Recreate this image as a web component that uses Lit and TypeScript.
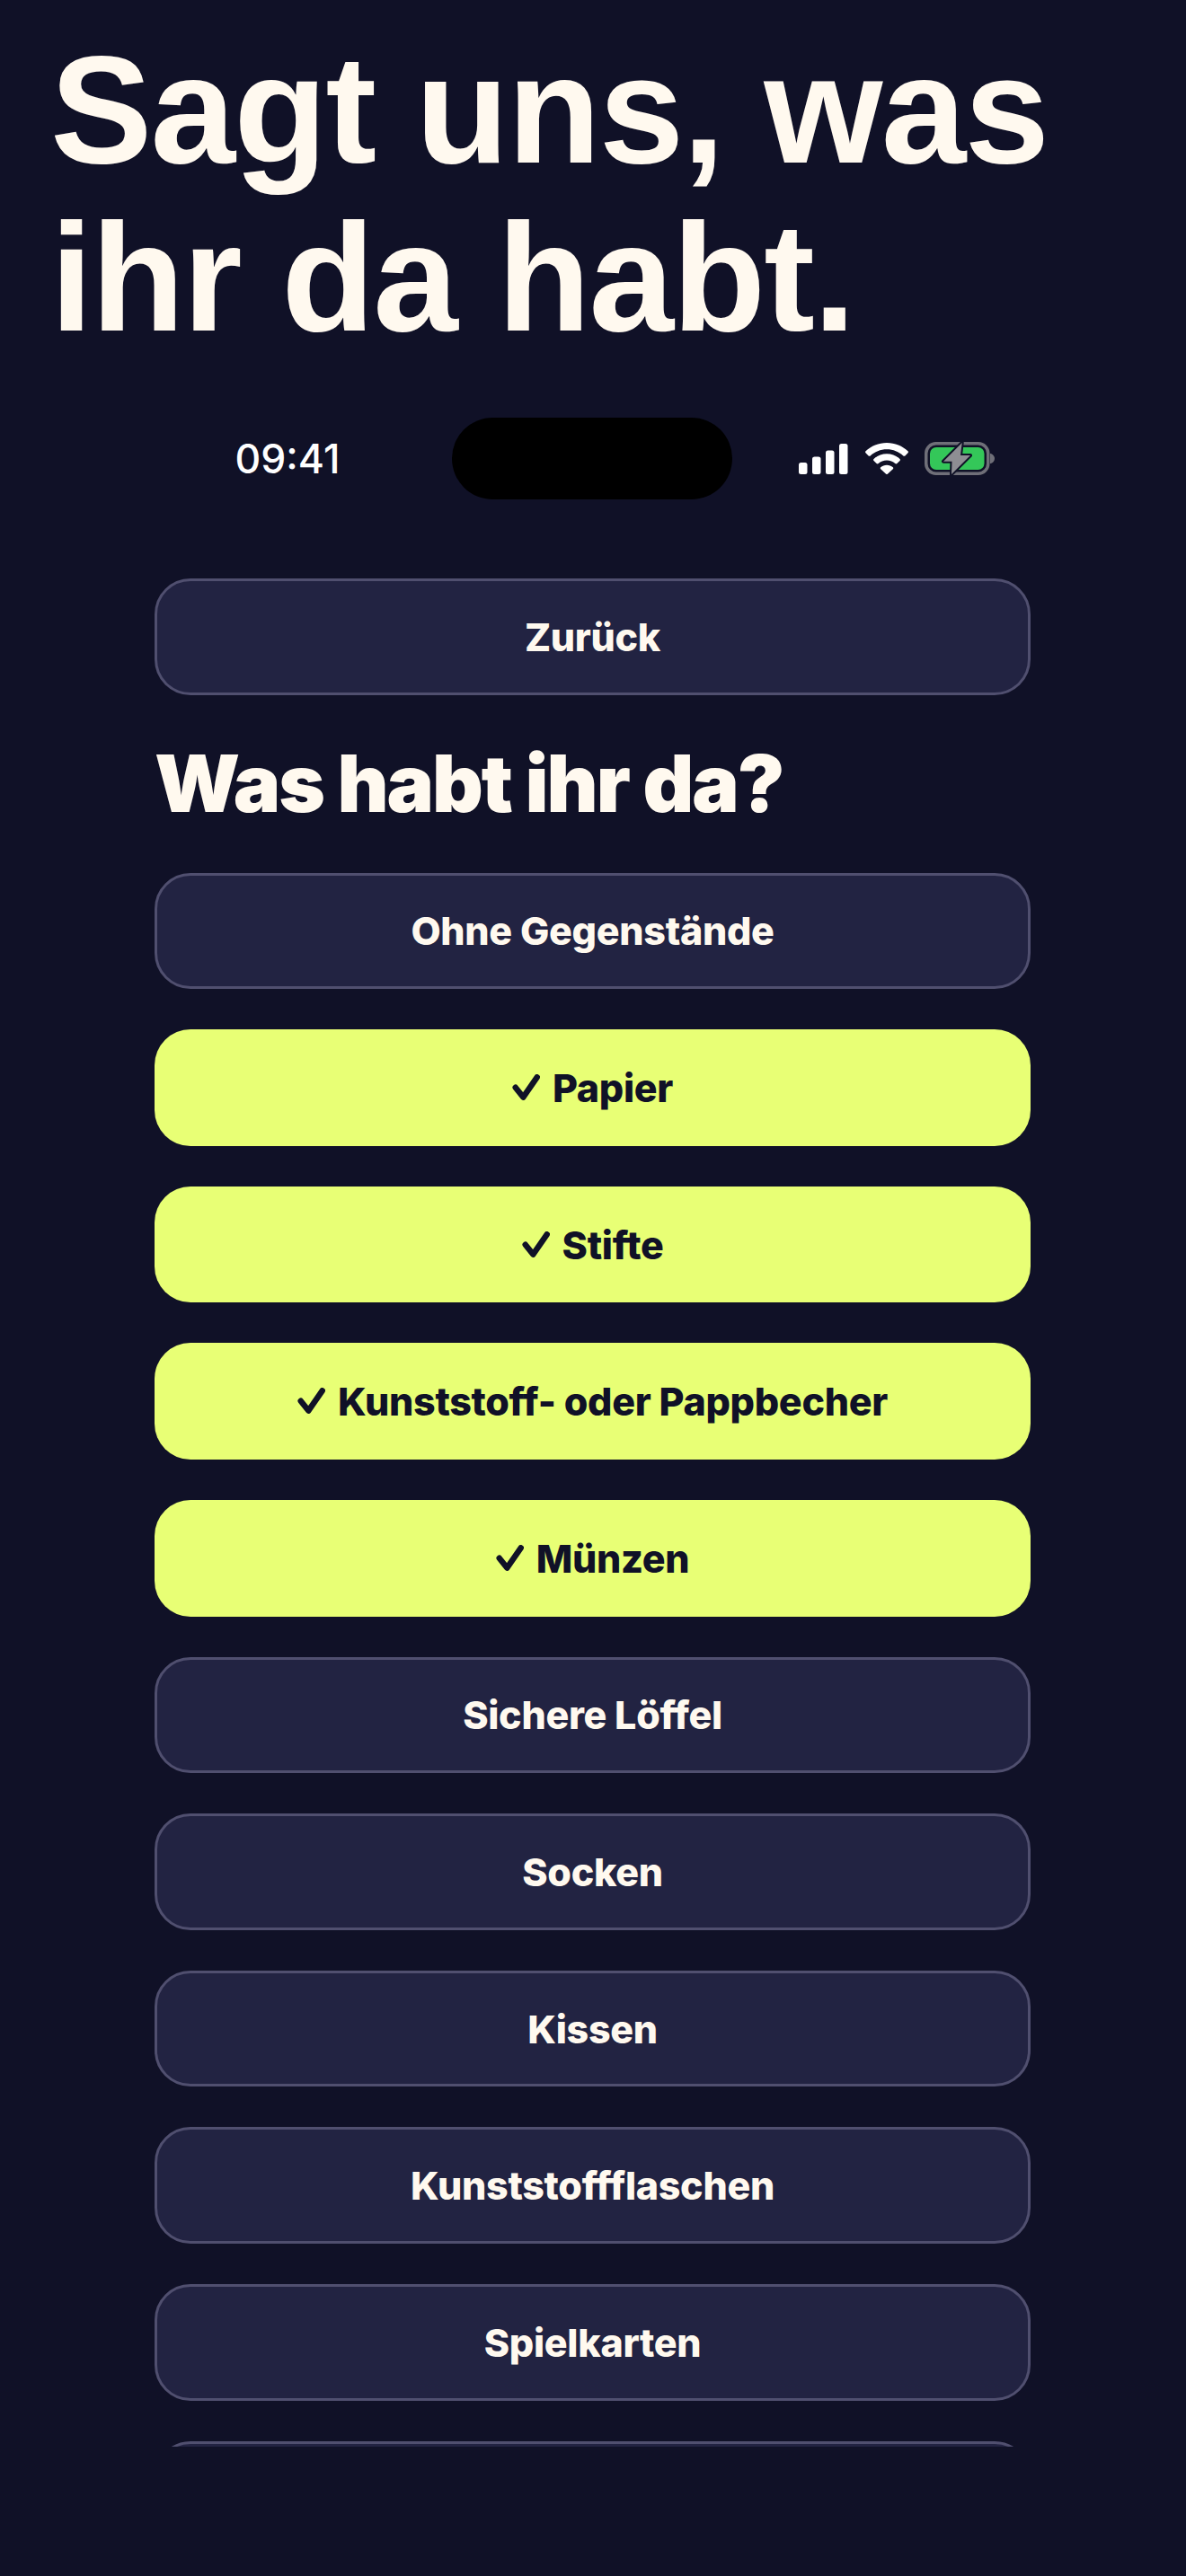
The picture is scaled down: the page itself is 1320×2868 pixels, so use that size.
import { LitElement, html, css, svg } from "lit";
import { customElement } from "lit/decorators.js";
import { classMap } from "lit/directives/class-map.js";

// the last button is cut off by the scroll area, its label is not visible
const OPTIONS = [
  { label: "Ohne Gegenstände", on: false },
  { label: "Papier", on: true },
  { label: "Stifte", on: true },
  { label: "Kunststoff- oder Pappbecher", on: true },
  { label: "Münzen", on: true },
  { label: "Sichere Löffel", on: false },
  { label: "Socken", on: false },
  { label: "Kissen", on: false },
  { label: "Kunststoffflaschen", on: false },
  { label: "Spielkarten", on: false },
  { label: "", on: false },
];

const signal = svg`<rect x="0" y="21" width="9.500" height="13" rx="2.500"/><rect x="15" y="14.500" width="9.500" height="19.500" rx="2.500"/><rect x="30" y="7.500" width="9.500" height="26.500" rx="2.500"/><rect x="45" y="0" width="9.500" height="34" rx="2.500"/>`;

const wifi = svg`<path d="M24 0C14.800 0 6.600 3.500.5 9.300c-.6.6-.6 1.400 0 2L3.600 14.400c.6.6 1.500.6 2.100 0C10.500 9.900 17 7.200 24 7.200s13.500 2.700 18.300 7.200c.6.6 1.500.6 2.100 0l3.100-3.100c.6-.6.6-1.400 0-2C41.400 3.500 33.200 0 24 0Z"/><path d="M24 12.300c-5.600 0-10.700 2.100-14.500 5.700-.6.6-.6 1.400 0 2l3.100 3.100c.6.6 1.500.6 2.100 0 2.400-2.200 5.700-3.600 9.300-3.600s6.900 1.400 9.300 3.600c.6.6 1.500.6 2.100 0l3.100-3.100c.6-.6.6-1.400 0-2-3.800-3.600-8.900-5.700-14.500-5.700Z"/><path d="M24 24.700c-2.600 0-5 1-6.800 2.600-.6.6-.6 1.400 0 2l5.700 5.300c.6.6 1.600.6 2.200 0l5.700-5.300c.6-.6.6-1.400 0-2-1.800-1.600-4.200-2.600-6.800-2.600Z"/>`;

const check = html`<svg class="check" width="31" height="30" viewBox="0 0 31 30"><path d="M3.700 14.700 12.300 25.600 27.700 3.300"/></svg>`;

@customElement("app-root")
export class AppRoot extends LitElement {
  static styles = css`
    :host {
      display: block;
      min-height: 2868px;
      background: #101127;
      color: #fff9ef;
      font-family: Inter, "Liberation Sans", sans-serif;
    }
    h1 {
      margin: 0;
      padding: 29px 56px 0;
      font-family: "Liberation Sans", Arial, sans-serif;
      font-size: 170px;
      line-height: 187px;
      font-weight: 700;
      letter-spacing: -1.800px;
    }
    .status {
      display: grid;
      grid-template-columns: 503px 312px 1fr;
      align-items: center;
      height: 91px;
      margin-top: 62px;
    }
    .time {
      padding-left: 137px;
      text-align: center;
      font-size: 44.500px;
      font-weight: 500;
      color: #fff;
    }
    .island {
      height: 91px;
      border-radius: 46px;
      background: #000;
    }
    .icons {
      display: flex;
      align-items: center;
      gap: 18.500px;
      padding-left: 74px;
    }
    .icons svg {
      display: block;
      fill: #fff;
    }
    .batt-frame {
      fill: none;
      stroke: #6f6f78;
      stroke-width: 3.500;
    }
    .batt-fill {
      fill: #34c759;
    }
    .batt-cap {
      fill: #6f6f78;
    }
    .batt-bolt {
      fill: #8e8e93;
      stroke: #101127;
      stroke-width: 4;
      paint-order: stroke;
      stroke-linejoin: round;
    }
    .screen {
      height: 2080px;
      margin: 88px 173px 0 172px;
      overflow: hidden;
    }
    .opt {
      box-sizing: border-box;
      display: flex;
      align-items: center;
      justify-content: center;
      gap: 14px;
      height: 129.600px;
      border: 3px solid #504f6f;
      border-radius: 40px;
      background: #222342;
      font-size: 43px;
      font-weight: 800;
      letter-spacing: -0.300px;
      color: #fff9ef;
    }
    .opt.on {
      border: 0;
      background: #e8ff75;
      color: #101127;
    }
    .check {
      display: block;
      flex: none;
      fill: none;
      stroke: #101127;
      stroke-width: 6.500;
      stroke-linecap: round;
      stroke-linejoin: round;
    }
    h2 {
      margin: 45px 0 47px;
      font-size: 88px;
      line-height: 106px;
      font-weight: 900;
      letter-spacing: -2px;
    }
    .list {
      display: flex;
      flex-direction: column;
      gap: 45px;
    }
  `;

  render() {
    return html`
      <h1>Sagt uns, was ihr da habt.</h1>
      <div class="status">
        <div class="time">09:41</div>
        <div class="island"></div>
        <div class="icons">
          <svg width="55" height="34" viewBox="0 0 55 34">${signal}</svg>
          <svg width="48" height="35" viewBox="0 0 48 35">${wifi}</svg>
          <svg width="78" height="37" viewBox="0 0 78 37">
            <rect class="batt-frame" x="1.750" y="1.750" width="69" height="33.500" rx="11"/>
            <rect class="batt-fill" x="6" y="6" width="60.500" height="25" rx="7"/>
            <path class="batt-cap" d="M73 12.700c3 .6 5 3 5 5.800s-2 5.200-5 5.800Z"/>
            <path class="batt-bolt" d="M41.700 1 21 21.700h9.500L30 36 51 15H40Z"/>
          </svg>
        </div>
      </div>
      <div class="screen">
        <div class="opt">Zurück</div>
        <h2>Was habt ihr da?</h2>
        <div class="list">
          ${OPTIONS.map(
            (o) => html`<div class=${classMap({ opt: true, on: o.on })}>${o.on ? check : ""}<span>${o.label}</span></div>`
          )}
        </div>
      </div>
    `;
  }
}
